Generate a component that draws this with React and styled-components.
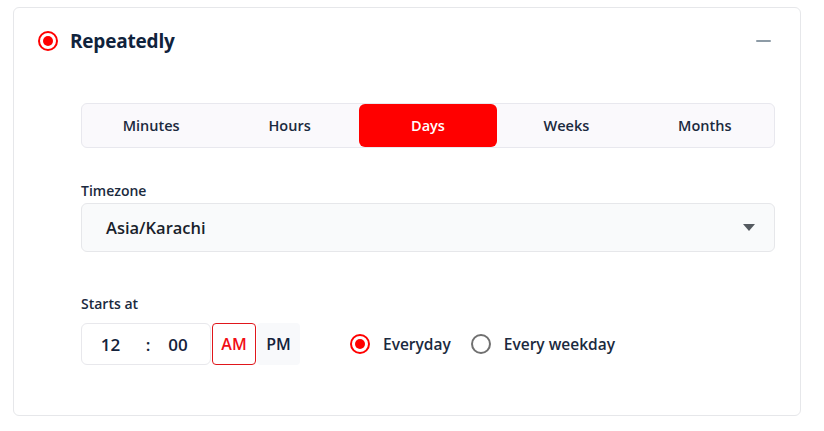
import React, {useState} from "react";
import styled, {createGlobalStyle} from "styled-components";

const GlobalStyle = createGlobalStyle`
  body {
    margin: 0;
    background: #ffffff;
    font-family: "Open Sans", "Noto Sans", sans-serif;
    color: #14233b;
  }
`

const Page = styled.div`
  padding: 7px 23px 16px 13px;
`

const Card = styled.div`
  border: 1px solid #e6e7ea;
  border-radius: 6px;
  background: #fff;
`

const Header = styled.div`
  height: 66px;
  display: flex;
  align-items: center;
  padding: 0 29px 0 24px;
`

const Title = styled.h2`
  flex: 1;
  margin: 0 0 0 12px;
  font-size: 19px;
  font-weight: 700;
  color: #10233c;
  letter-spacing: -0.2px;
`

const Collapse = styled.span`
  width: 15px;
  height: 2px;
  background: #8d9ba6;
  border-radius: 1px;
`

const Body = styled.div`
  padding: 29px 25px 50px 67px;
`

const Tabs = styled.div`
  display: grid;
  grid-template-columns: repeat(5, 1fr);
  height: 45px;
  border: 1px solid #e8e8ee;
  border-radius: 6px;
  background: #faf9fc;
  box-sizing: border-box;
`

const Tab = styled.button`
  border: 0;
  border-radius: 6px;
  background: ${p => p.$active ? "#ff0000" : "transparent"};
  color: ${p => p.$active ? "#fff" : "#1b2a3e"};
  font-family: inherit;
  font-size: 14.5px;
  font-weight: 600;
  cursor: pointer;
  padding: 0 0 1px;
`

const Label = styled.div`
  font-size: 14px;
  font-weight: 600;
  line-height: 20px;
  color: #1b2a3e;
  margin: ${p => p.$top}px 0 ${p => p.$bottom}px;
`

const Select = styled.div`
  height: 49px;
  box-sizing: border-box;
  border: 1px solid #e6e7ea;
  border-radius: 6px;
  background: #f9fafb;
  display: flex;
  align-items: center;
  padding: 0 19px 0 24px;
  font-size: 16.5px;
  font-weight: 600;
  color: #1a1f2b;
`

const SelectValue = styled.span`
  flex: 1;
`

const Caret = styled.span`
  width: 0;
  height: 0;
  border-left: 6px solid transparent;
  border-right: 6px solid transparent;
  border-top: 7px solid #555a60;
`

const Row = styled.div`
  display: flex;
  align-items: center;
  height: 42px;
`

const TimeBox = styled.div`
  width: 130px;
  height: 42px;
  box-sizing: border-box;
  border: 1px solid #e8e8ec;
  border-radius: 6px;
  display: flex;
  align-items: center;
  font-size: 17px;
  font-weight: 600;
  color: #14233b;
`

const TimePart = styled.span`
  width: ${p => p.$w}px;
  text-align: center;
`

const Meridiem = styled.button`
  width: ${p => p.$w}px;
  height: 42px;
  box-sizing: border-box;
  border: 1px solid ${p => p.$active ? "#e0161b" : "transparent"};
  border-radius: 4px;
  background: ${p => p.$active ? "#fff" : "#f8f9fb"};
  color: ${p => p.$active ? "#f10e14" : "#14233b"};
  font-family: inherit;
  font-size: 16px;
  font-weight: 600;
  padding: 0;
  margin-left: 1px;
`

const Options = styled.div`
  display: flex;
  align-items: center;
  margin-left: 50px;
`

const Option = styled.label`
  display: flex;
  align-items: center;
  gap: 13px;
  margin-right: 20px;
  font-size: 15.5px;
  font-weight: 600;
  color: #1b2a3e;
  cursor: pointer;
`

const Dot = styled.span`
  width: 20px;
  height: 20px;
  box-sizing: border-box;
  border-radius: 50%;
  border: 2.5px solid ${p => p.$on ? "#ff0000" : "#707070"};
  display: flex;
  align-items: center;
  justify-content: center;

  &::after {
    content: "";
    width: 10px;
    height: 10px;
    border-radius: 50%;
    background: ${p => p.$on ? "#ff0000" : "transparent"};
  }
`

const units = ["Minutes", "Hours", "Days", "Weeks", "Months"]

export default function App() {
    const [unit, setUnit] = useState("Days")
    const [ampm, setAmpm] = useState("AM")
    const [every, setEvery] = useState("Everyday")

    return (
        <>
            <GlobalStyle/>
            <Page>
                <Card>
                    <Header>
                        <Dot $on/>
                        <Title>Repeatedly</Title>
                        <Collapse/>
                    </Header>
                    <Body>
                        <Tabs>
                            {units.map((u) => (
                                <Tab key={u} $active={u === unit} onClick={() => setUnit(u)}>{u}</Tab>
                            ))}
                        </Tabs>

                        <Label $top={33} $bottom={2}>Timezone</Label>
                        <Select>
                            <SelectValue>Asia/Karachi</SelectValue>
                            <Caret/>
                        </Select>

                        <Label $top={42} $bottom={9}>Starts at</Label>
                        <Row>
                            <TimeBox>
                                <TimePart $w={57}>12</TimePart>
                                <TimePart $w={18}>:</TimePart>
                                <TimePart $w={42}>00</TimePart>
                            </TimeBox>
                            {["AM", "PM"].map((m) => (
                                <Meridiem key={m} $w={m === "AM" ? 44 : 43} $active={m === ampm}
                                          onClick={() => setAmpm(m)}>{m}</Meridiem>
                            ))}
                            <Options>
                                {["Everyday", "Every weekday"].map((o) => (
                                    <Option key={o} onClick={() => setEvery(o)}>
                                        <Dot $on={o === every}/>
                                        {o}
                                    </Option>
                                ))}
                            </Options>
                        </Row>
                    </Body>
                </Card>
            </Page>
        </>
    )
}
